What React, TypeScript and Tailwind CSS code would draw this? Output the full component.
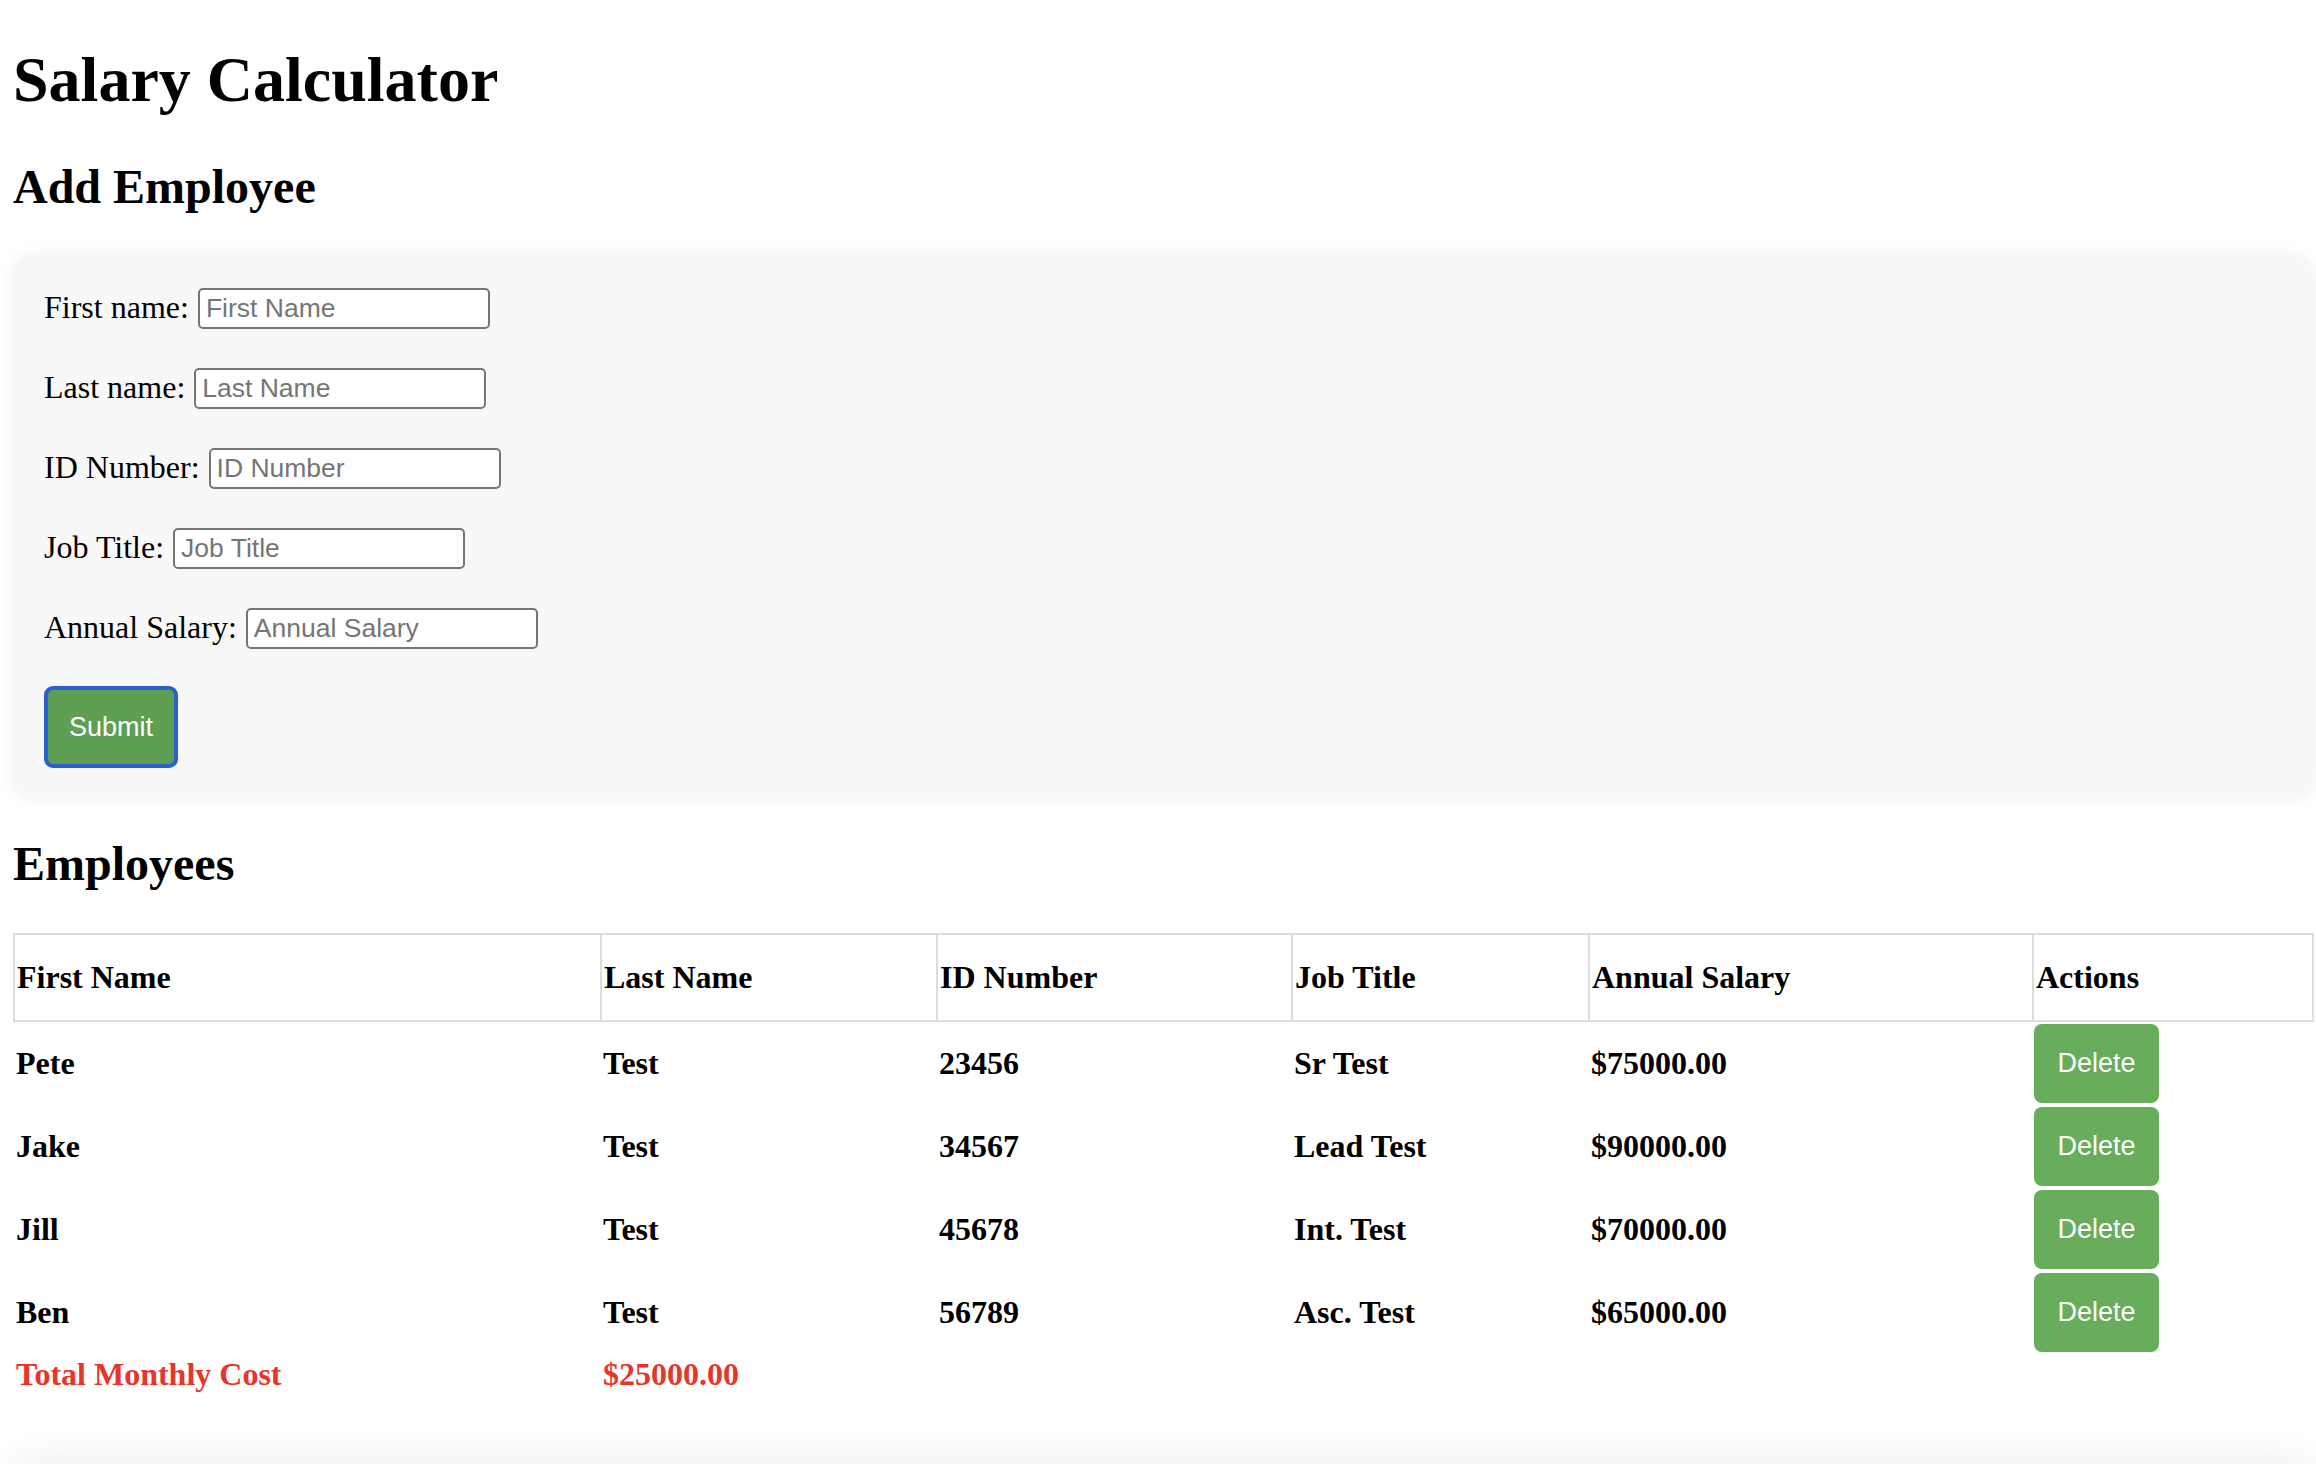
const employees = [
  { first: "Pete", last: "Test", id: "23456", title: "Sr Test", salary: "$75000.00" },
  { first: "Jake", last: "Test", id: "34567", title: "Lead Test", salary: "$90000.00" },
  { first: "Jill", last: "Test", id: "45678", title: "Int. Test", salary: "$70000.00" },
  { first: "Ben", last: "Test", id: "56789", title: "Asc. Test", salary: "$65000.00" },
];

const fields = [
  { label: "First name:", placeholder: "First Name" },
  { label: "Last name:", placeholder: "Last Name" },
  { label: "ID Number:", placeholder: "ID Number" },
  { label: "Job Title:", placeholder: "Job Title" },
  { label: "Annual Salary:", placeholder: "Annual Salary" },
];

const serif = "font-['Liberation_Serif','Times_New_Roman',serif]";
const sans = "font-['Liberation_Sans',Arial,sans-serif]";

export default function App() {
  return (
    <main className={`min-h-screen bg-white pl-[13px] text-black ${serif}`}>
      <h1 className="mt-[43px] text-[64px] font-bold leading-[74px]">Salary Calculator</h1>
      <h2 className="mt-[42px] text-[48px] font-bold leading-[56px]">Add Employee</h2>

      <form
        className="mt-[40px] w-[2300px] rounded-[20px] bg-[#f8f8f8] pb-[30px] pl-[31px] pt-[33px] shadow-[0_0_18px_rgba(0,0,0,0.06)]"
        onSubmit={(e) => e.preventDefault()}
      >
        {fields.map((f) => (
          <div key={f.label} className="mb-[39px] flex h-[41px] items-center gap-[9px] text-[32px]">
            <label className="-mt-[2px] leading-[37px]">{f.label}</label>
            <input
              type="text"
              placeholder={f.placeholder}
              className={`h-[41px] w-[292px] rounded-[5px] border-2 border-[#767676] bg-white px-[6px] text-[26.5px] text-black placeholder:text-[#757575] ${sans}`}
            />
          </div>
        ))}
        <button
          type="submit"
          className={`-mt-[2px] h-[82px] w-[134px] rounded-[9px] border-[4px] border-[#2d5fcf] bg-[#5e9f53] text-[27px] text-white ${sans}`}
        >
          Submit
        </button>
      </form>

      <h2 className="mt-[38px] text-[48px] font-bold leading-[56px]">Employees</h2>

      <table className="mt-[41px] w-[2299px] table-fixed border-collapse text-left text-[32px] font-bold leading-[37px]">
        <thead>
          <tr>
            <th className="h-[87px] w-[587px] border-2 border-[#dddddd] px-[2px]">First Name</th>
            <th className="h-[87px] w-[336px] border-2 border-[#dddddd] px-[2px]">Last Name</th>
            <th className="h-[87px] w-[355px] border-2 border-[#dddddd] px-[2px]">ID Number</th>
            <th className="h-[87px] w-[297px] border-2 border-[#dddddd] px-[2px]">Job Title</th>
            <th className="h-[87px] w-[444px] border-2 border-[#dddddd] px-[2px]">Annual Salary</th>
            <th className="h-[87px] w-[280px] border-2 border-[#dddddd] px-[2px]">Actions</th>
          </tr>
        </thead>
        <tbody>
          {employees.map((emp) => (
            <tr key={emp.id}>
              <td className="px-[2px] py-[2px]">{emp.first}</td>
              <td className="px-[2px] py-[2px]">{emp.last}</td>
              <td className="px-[2px] py-[2px]">{emp.id}</td>
              <td className="px-[2px] py-[2px]">{emp.title}</td>
              <td className="px-[2px] py-[2px]">{emp.salary}</td>
              <td className="px-[1px] py-[2px]">
                <button
                  type="button"
                  className={`block h-[79px] w-[125px] rounded-[8px] bg-[#67ad5c] text-[27px] font-normal text-white ${sans}`}
                >
                  Delete
                </button>
              </td>
            </tr>
          ))}
          <tr className="text-[#e8352a]">
            <td className="px-[2px] py-[2px]">Total Monthly Cost</td>
            <td className="px-[2px] py-[2px]">$25000.00</td>
            <td />
            <td />
            <td />
            <td />
          </tr>
        </tbody>
      </table>

      <div className="mt-[68px] h-[200px] w-[2300px] rounded-[20px] bg-[#f8f8f8] shadow-[0_0_40px_rgba(0,0,0,0.08)]" />
    </main>
  );
}
